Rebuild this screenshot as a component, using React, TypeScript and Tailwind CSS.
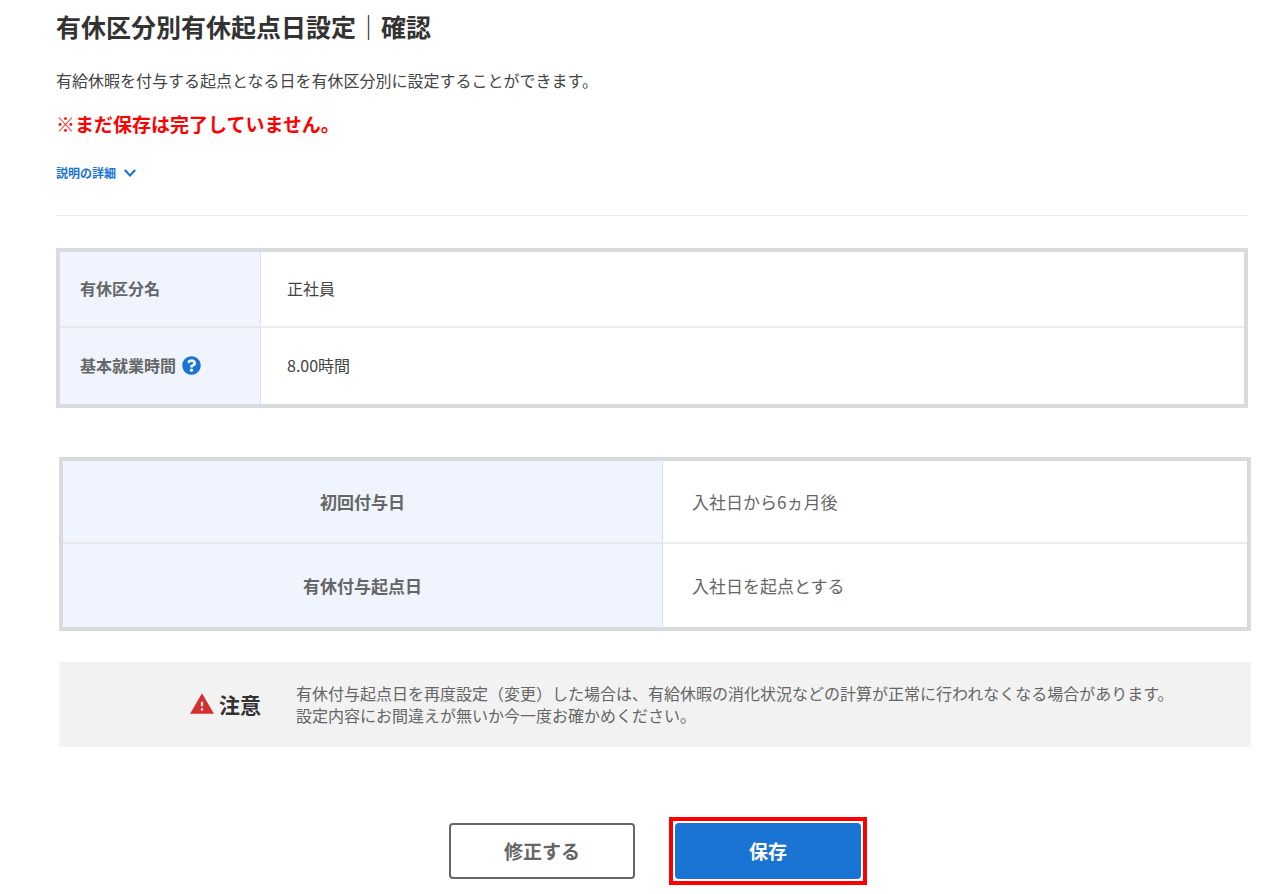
import { useState } from 'react';
import { FaQuestionCircle } from 'react-icons/fa';
import { MdWarning } from 'react-icons/md';

const basicRows = [
  { label: '有休区分名', value: '正社員', help: false },
  { label: '基本就業時間', value: '8.00時間', help: true },
];

const grantRows = [
  { label: '初回付与日', value: '入社日から6ヵ月後' },
  { label: '有休付与起点日', value: '入社日を起点とする' },
];

function Chevron({ open }: { open: boolean }) {
  return (
    <svg viewBox="0 0 12 8" className={`w-3 h-2 ${open ? 'rotate-180' : ''}`} fill="none" stroke="currentColor" strokeWidth="2.2" aria-hidden="true">
      <path d="M.8 1 6 6.4 11.2 1" />
    </svg>
  );
}

function BasicTable() {
  return (
    <div className="mt-8 mr-8 ml-14 border-4 border-[#d9dbde]">
      <table className="w-full border-separate border-spacing-0">
        <tbody>
          {basicRows.map((row, i) => (
            <tr key={row.label} className="h-[76px]">
              <th scope="row" className={`w-[201px] pl-5 pb-0.5 text-left font-bold text-[#666] bg-[#eff4fe] border-r border-r-[#dfe1e5] ${i === 0 ? 'border-b-2 border-b-[#e6e8ec]' : ''}`}>
                <div className="flex items-center gap-1.5">
                  {row.label}
                  {row.help && (
                    <button type="button" aria-label="ヘルプ" className="text-[#1a74d4]">
                      <FaQuestionCircle size={19} />
                    </button>
                  )}
                </div>
              </th>
              <td className={`pl-[26px] pb-0.5 text-[#444] ${i === 0 ? 'border-b-2 border-b-[#ececee]' : ''}`}>{row.value}</td>
            </tr>
          ))}
        </tbody>
      </table>
    </div>
  );
}

function GrantTable() {
  return (
    <div className="border-4 border-[#dadbdf]">
      <table className="w-full border-separate border-spacing-0 text-[17px]">
        <tbody>
          {grantRows.map((row, i) => (
            <tr key={row.label} className="h-[83px]">
              <th scope="row" className={`w-[600px] text-center font-bold text-[#666] bg-[#eff4fe] border-r border-r-[#dfe1e5] ${i === 0 ? 'border-b-2 border-b-[#e6e8ec]' : ''}`}>{row.label}</th>
              <td className={`pl-[29px] text-[#666] ${i === 0 ? 'border-b-2 border-b-[#ececee]' : ''}`}>{row.value}</td>
            </tr>
          ))}
        </tbody>
      </table>
    </div>
  );
}

export default function App() {
  const [open, setOpen] = useState(false);

  return (
    <main className="bg-white pt-2 pb-2.5 text-base leading-6 font-['Noto_Sans_CJK_JP',sans-serif]">
      <header className="mr-8 ml-14 pb-8 border-b border-[#ececec]">
        <h1 className="text-[25px] leading-9 font-bold text-[#333]">有休区分別有休起点日設定｜確認</h1>
        <p className="mt-6 text-[#444]">有給休暇を付与する起点となる日を有休区分別に設定することができます。</p>
        <p className="mt-[18px] text-[19px] leading-7 font-bold text-[#ff0000]">※まだ保存は完了していません。</p>
        <button type="button" aria-expanded={open} onClick={() => setOpen(!open)} className="mt-[25px] flex items-center gap-2 text-xs leading-5 font-bold text-[#1a74d4]">
          説明の詳細
          <Chevron open={open} />
        </button>
      </header>

      <BasicTable />

      <div className="mt-[49px] mr-[29px] ml-[59px]">
        <GrantTable />

        <section className="mt-[31px] pt-5 pb-[21px] pr-10 flex items-center bg-[#f2f2f2]">
          <div className="w-[237px] shrink-0 pl-[130px] flex items-center gap-1">
            <MdWarning size={26} className="shrink-0 text-[#d32f2f]" />
            <strong className="text-[21px] leading-7 font-bold text-[#333] whitespace-nowrap">注意</strong>
          </div>
          <p className="leading-[22px] text-[#666]">
            有休付与起点日を再度設定（変更）した場合は、有給休暇の消化状況などの計算が正常に行われなくなる場合があります。
            <br />
            設定内容にお間違えが無いか今一度お確かめください。
          </p>
        </section>

        <div className="mt-[70px] pl-1.5 flex items-center justify-center gap-[34px]">
          <button type="button" className="w-[186px] h-14 rounded border-2 border-[#666] bg-white text-[19px] font-bold text-[#666]">修正する</button>
          <div className="p-0.5 border-4 border-[#ff0000]">
            <button type="button" className="block w-[186px] h-14 rounded bg-[#1a74d4] text-[19px] font-bold text-white">保存</button>
          </div>
        </div>
      </div>
    </main>
  );
}
